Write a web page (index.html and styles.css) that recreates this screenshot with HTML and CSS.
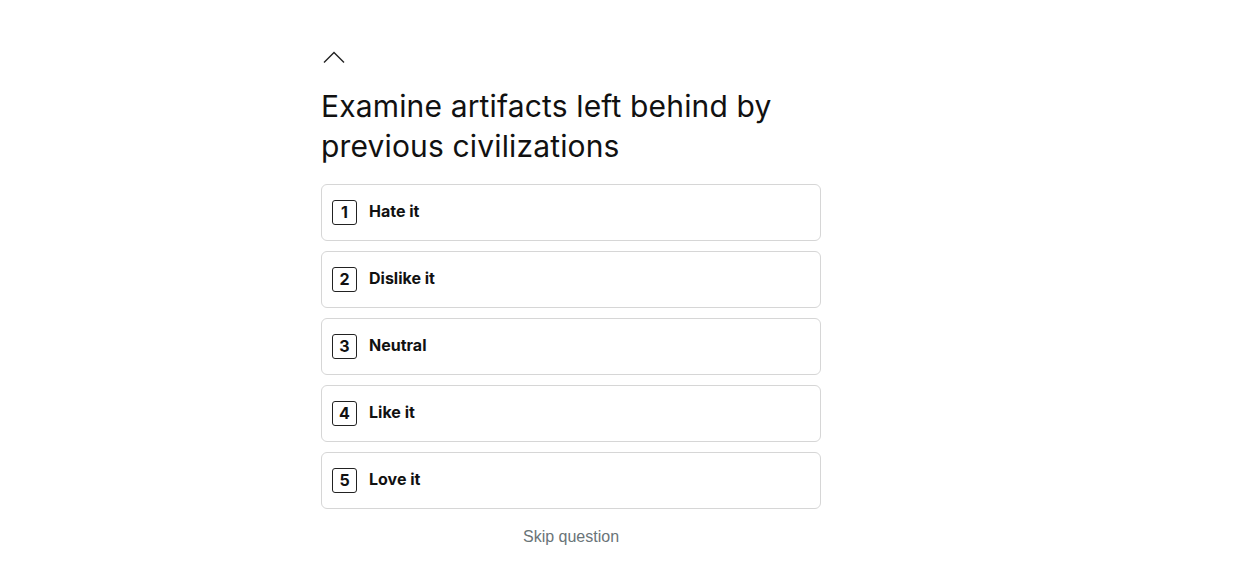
FILE: index.html
```html
<!DOCTYPE html>
<html lang="en">
<head>
<meta charset="utf-8">
<link rel="stylesheet" href="styles.css">
</head>
<body>
<main class="wrap">
  <button class="back" aria-label="Previous question">
    <svg width="22" height="12" viewBox="0 0 22 12"><path d="M1 11.5 L11 1.5 L21 11.5" fill="none" stroke="#222" stroke-width="1.4"/></svg>
  </button>
  <h1 class="title">Examine artifacts left behind by previous civilizations</h1>
  <div class="options">
    <button class="option"><span class="key">1</span><span class="label">Hate it</span></button>
    <button class="option"><span class="key">2</span><span class="label">Dislike it</span></button>
    <button class="option"><span class="key">3</span><span class="label">Neutral</span></button>
    <button class="option"><span class="key">4</span><span class="label">Like it</span></button>
    <button class="option"><span class="key">5</span><span class="label">Love it</span></button>
  </div>
  <button class="skip">Skip question</button>
</main>
</body>
</html>
```
FILE: styles.css
```css
* { box-sizing: border-box; }
html, body { margin: 0; background: #fff; }
body { font-family: Inter, "Liberation Sans", sans-serif; color: #111; }
.wrap {
  width: 500px;
  margin-left: 321px;
  padding-top: 51px;
  display: flex;
  flex-direction: column;
}
.back {
  border: 0; background: none; padding: 0 0 0 2px; margin: 0;
  width: 26px; height: 13px; display: flex; cursor: pointer;
}
.title {
  font-weight: 400;
  font-size: 30px;
  line-height: 40px;
  margin: 22px 0 18px;
  letter-spacing: 0.15px;
  color: #111;
}
.options { display: flex; flex-direction: column; gap: 10px; }
.option {
  height: 57px;
  border: 1px solid #d6d6d6;
  border-radius: 6px;
  background: #fff;
  display: flex;
  align-items: center;
  padding: 0 0 0 10px;
  gap: 12px;
  font-family: inherit;
  cursor: pointer;
  text-align: left;
}
.key {
  width: 25px; height: 25px;
  border: 1px solid #222;
  border-radius: 3px;
  display: flex; align-items: center; justify-content: center;
  font-weight: 700; font-size: 16px; color: #111;
  padding-bottom: 1px;
}
.label { font-weight: 700; font-size: 16px; color: #111; padding-bottom: 4px; }
.skip {
  align-self: center;
  margin-top: 19px;
  border: 0; background: none; padding: 0;
  font-family: "Liberation Sans", Arial, sans-serif;
  font-size: 16px;
  color: #6a7478;
  cursor: pointer;
}
```
